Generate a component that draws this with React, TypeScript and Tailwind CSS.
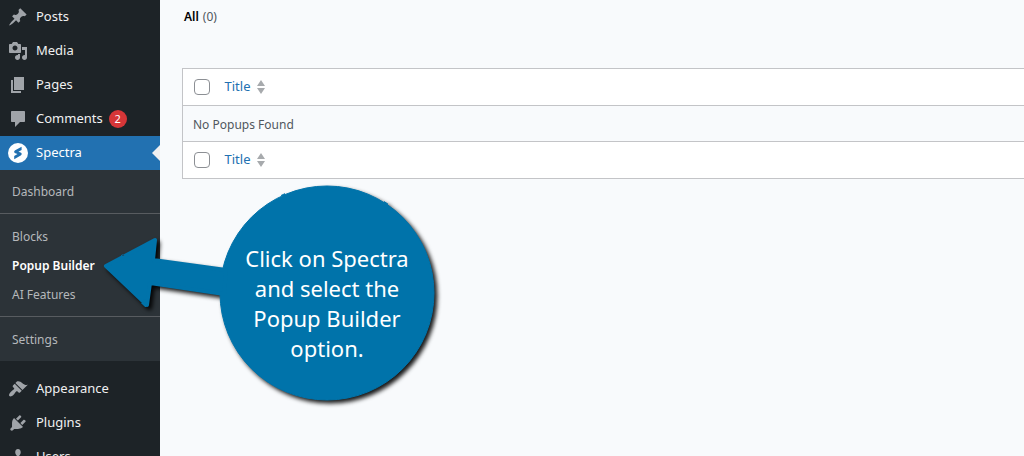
import { useState } from 'react'

interface MenuEntry {
  label: string
  path: string
  count?: number
}

const MENU_TOP: MenuEntry[] = [
  {
    label: 'Posts',
    path: 'M10.44 3.02l1.82-1.82 6.36 6.35-1.83 1.82c-1.05-.68-2.48-.57-3.41.36l-.75.75c-.92.93-1.04 2.35-.35 3.41l-1.83 1.82-2.41-2.41-2.8 2.79c-.42.42-3.38 2.71-3.8 2.29s1.86-3.39 2.28-3.81l2.79-2.79L4.1 9.36l1.83-1.82c1.05.69 2.48.57 3.4-.36l.75-.75c.93-.92 1.05-2.35.36-3.41z',
  },
  {
    label: 'Media',
    path: 'M13 11V4c0-.55-.45-1-1-1h-1.67L9 1H5L3.67 3H2c-.55 0-1 .45-1 1v7c0 .55.45 1 1 1h10c.55 0 1-.45 1-1zM7 4.5c1.38 0 2.5 1.12 2.5 2.5S8.38 9.5 7 9.5 4.5 8.38 4.5 7 5.62 4.5 7 4.5zM14 6h5v10.5c0 1.38-1.12 2.5-2.5 2.5S14 17.88 14 16.5s1.12-2.5 2.5-2.5c.17 0 .34.02.5.05V9h-3V6zm-4 8.05V13h2v3.5c0 1.38-1.12 2.5-2.5 2.5S7 17.88 7 16.5 8.12 14 9.5 14c.17 0 .34.02.5.05z',
  },
  { label: 'Pages', path: 'M6 15V2h10v13H6zm-1 1h8v2H3V5h2v11z' },
  {
    label: 'Comments',
    path: 'M4 2h12c.6 0 1 .4 1 1v9c0 .6-.4 1-1 1h-4l-5 5v-5H4c-.6 0-1-.4-1-1V3c0-.6.4-1 1-1z',
    count: 2,
  },
]

const MENU_BOTTOM: MenuEntry[] = [
  {
    label: 'Appearance',
    path: 'M14.48 11.06L7.41 3.99l1.5-1.5c.5-.56 2.3-.47 3.51.32 1.21.8 1.43 1.28 2.91 2.1 1.18.64 2.45 1.26 4.45.85zm-.71.71L6.7 4.7 4.93 6.47c-.39.39-.39 1.02 0 1.41l1.06 1.06c.39.39.39 1.03 0 1.42-.6.6-1.43 1.11-2.21 1.69-.35.26-.7.53-1.01.84C1.43 14.23.4 16.08 1.4 17.07c.99 1 2.84-.03 4.18-1.36.31-.31.58-.66.85-1.02.57-.78 1.08-1.61 1.69-2.21.39-.39 1.02-.39 1.41 0l1.06 1.06c.39.39 1.02.39 1.41 0z',
  },
  {
    label: 'Plugins',
    path: 'M13.11 4.36L9.87 7.6 8 5.73l3.24-3.24c.35-.34 1.05-.2 1.56.32.52.51.66 1.21.31 1.55zm-8 1.77l.91-1.12 9.01 9.01-1.19.84c-.71.71-2.63 1.16-3.82 1.16H6.14L4.9 17.26c-.59.59-1.54.59-2.12 0-.59-.58-.59-1.53 0-2.12l1.24-1.24v-3.88c0-1.13.4-3.19 1.09-3.89zm7.26 3.97l3.24-3.24c.34-.35 1.04-.21 1.55.31.52.51.66 1.21.31 1.55l-3.24 3.25z',
  },
  {
    label: 'Users',
    path: 'M10 9.25c-2.27 0-2.73-3.44-2.73-3.44C7 4.02 7.82 2 9.97 2c2.16 0 2.98 2.02 2.71 3.81 0 0-.41 3.44-2.68 3.44zm0 2.57L12.72 10c2.39 0 4.52 2.33 4.52 4.53v2.49s-3.65 1.13-7.24 1.13c-3.65 0-7.24-1.13-7.24-1.13v-2.49c0-2.25 1.94-4.48 4.47-4.48z',
  },
]

// Submenu items, split where the divider lines go.
const SUBMENU = [['Dashboard'], ['Blocks', 'Popup Builder', 'AI Features'], ['Settings']]

function MenuItem({ label, path, count }: MenuEntry) {
  return (
    <li>
      <a href="#" className="flex h-[34px] items-center gap-2 px-2 text-[13px] text-[#f0f0f1]">
        <svg viewBox="0 0 20 20" className="size-5 shrink-0 fill-[#a0a4a9]" aria-hidden="true">
          <path d={path} />
        </svg>
        <span>{label}</span>
        {count && (
          <span className="-ml-[2px] flex size-[18px] items-center justify-center rounded-full bg-[#d63638] text-[11px] text-white">
            {count}
          </span>
        )}
      </a>
    </li>
  )
}

function Sidebar() {
  return (
    <nav className="w-40 shrink-0 bg-[#1d2327]">
      <ul>
        {MENU_TOP.map(item => <MenuItem key={item.label} {...item} />)}
        <li>
          <a href="#" className="flex h-[34px] items-center gap-2 bg-[#2271b1] pl-2 text-[13px] text-white">
            <svg viewBox="0 0 20 20" className="size-5 shrink-0" aria-hidden="true">
              <circle cx="10" cy="10" r="10" fill="#fff" />
              <path
                d="M13.6 3.7L7.2 7.2C5.7 8 5.9 9.7 7.3 10.2l2.2.9-3.3 1.9v3.3l6.5-3.7c1.4-.8 1.3-2.4-.1-3l-2.2-.9 3.2-1.8z"
                fill="#2271b1"
              />
            </svg>
            <span>Spectra</span>
            <span className="ml-auto border-y-8 border-r-8 border-y-transparent border-r-[#f0f0f1]" />
          </a>
          <div className="divide-y divide-[#585c60] bg-[#2c3338]">
            {SUBMENU.map(group => (
              <ul key={group[0]} className="pt-2 pb-[7px] first:pt-[7px]">
                {group.map(label => (
                  <li key={label}>
                    <a
                      href="#"
                      className={`flex h-[29px] items-center px-3 text-xs ${
                        label === 'Popup Builder' ? 'font-semibold text-white' : 'text-[#b5b8bb]'
                      }`}
                    >
                      {label}
                    </a>
                  </li>
                ))}
              </ul>
            ))}
          </div>
        </li>
      </ul>
      <ul className="mt-[11px]">
        {MENU_BOTTOM.map(item => <MenuItem key={item.label} {...item} />)}
      </ul>
    </nav>
  )
}

function TitleRow({ checked, onToggle }: { checked: boolean; onToggle: () => void }) {
  return (
    <tr className="h-[37px] border-y border-[#c3c4c7] bg-white">
      <td className="w-[31px] pl-[11px]">
        <input
          type="checkbox"
          aria-label="Select all"
          checked={checked}
          onChange={onToggle}
          className="block size-4 appearance-none rounded border border-[#8c8f94] bg-white checked:bg-[#2271b1]"
        />
      </td>
      <th scope="col" className="pl-[11px] text-left font-normal">
        <a href="#" className="flex items-center gap-[7px] text-[13px] text-[#2271b1]">
          <span>Title</span>
          <svg viewBox="0 0 8 14" className="h-[14px] w-2 fill-[#a7aaad]" aria-hidden="true">
            <path d="M4 0l4 6H0zM4 14l4-6H0z" />
          </svg>
        </a>
      </th>
    </tr>
  )
}

function PopupTable() {
  const [checked, setChecked] = useState(false)
  const toggle = () => setChecked(!checked)

  return (
    <table className="w-full border-collapse border border-[#c3c4c7]">
      <thead>
        <TitleRow checked={checked} onToggle={toggle} />
      </thead>
      <tbody>
        <tr className="h-9">
          <td colSpan={2} className="px-[10px] pt-[2px] text-xs text-[#50575e]">No Popups Found</td>
        </tr>
      </tbody>
      <tfoot>
        <TitleRow checked={checked} onToggle={toggle} />
      </tfoot>
    </table>
  )
}

// Tutorial bubble whose arrow points at the Popup Builder link.
function Callout() {
  return (
    <div className="pointer-events-none absolute top-[180px] left-[100px] h-[230px] w-[345px]">
      <svg viewBox="0 0 345 230" className="absolute inset-0 size-full drop-shadow-[3px_3px_2px_rgba(0,0,0,0.9)]" aria-hidden="true">
        {/* slightly ragged, hand-cut edge */}
        <filter id="ragged" x="-5%" y="-5%" width="110%" height="110%">
          <feTurbulence type="fractalNoise" baseFrequency="0.1" numOctaves="1" seed="4" />
          <feDisplacementMap in="SourceGraphic" scale="2" xChannelSelector="R" yChannelSelector="G" />
        </filter>
        <g filter="url(#ragged)" fill="#0073aa" stroke="#0073aa" strokeLinejoin="round">
          <circle cx="227" cy="113" r="107" />
          <path d="M6 86L55 60 53 80 126 90 124 114 50 103 47 125z" strokeWidth="4" />
        </g>
      </svg>
      <p className="relative pt-[63px] pl-[109px] text-center text-[22px] leading-[30px] text-white">
        Click on Spectra
        <br />
        and select the
        <br />
        Popup Builder
        <br />
        option.
      </p>
    </div>
  )
}

export default function App() {
  return (
    <div className="relative flex h-screen overflow-hidden bg-[#f8fafc] font-['Noto_Sans',sans-serif]">
      <Sidebar />
      <main className="min-w-0 flex-1 pl-[22px]">
        <div className="flex h-[68px] gap-1 pt-[7px] pl-[2px] text-xs leading-5">
          <a href="#" className="font-semibold text-black">All</a>
          <span className="text-[#50575e]">(0)</span>
        </div>
        {/* the table runs on past the right edge of the window */}
        <div className="-mr-px">
          <PopupTable />
        </div>
      </main>
      <Callout />
    </div>
  )
}
